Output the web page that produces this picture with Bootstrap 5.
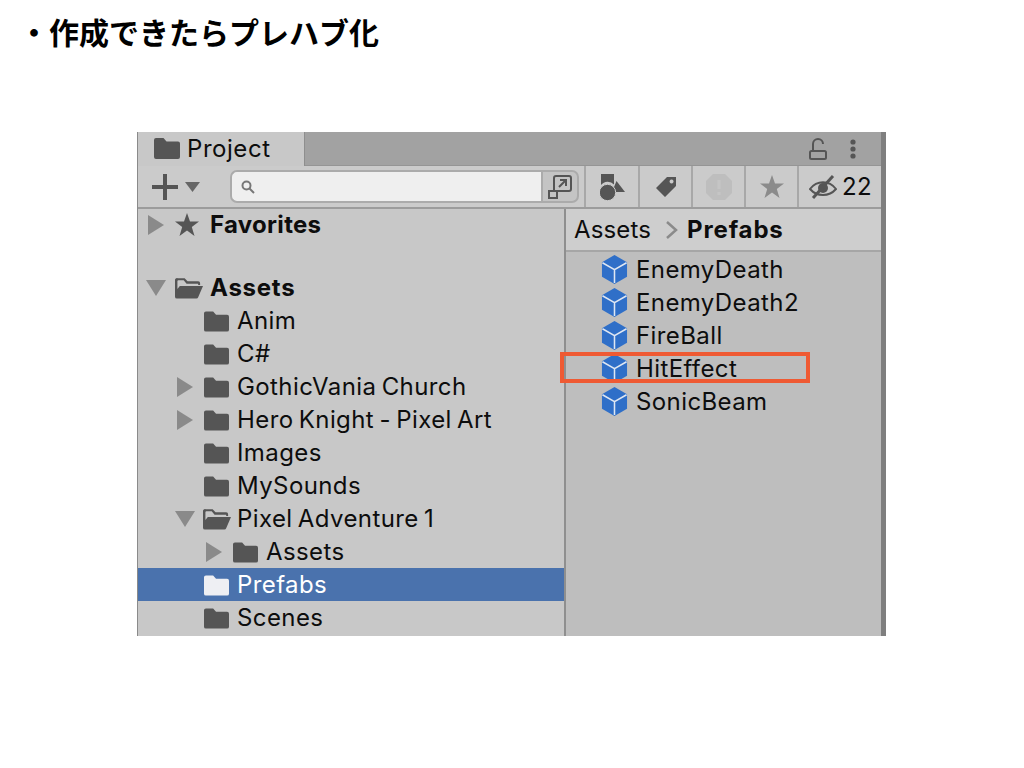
<!DOCTYPE html>
<html lang="ja">
<head>
  <meta charset="UTF-8" />
  <title>Prefab</title>
  <link href="https://cdn.jsdelivr.net/npm/bootstrap@5.3.0/dist/css/bootstrap.min.css" rel="stylesheet" />
  <style>
    html, body { background: #fff; }
    body { width: 1024px; height: 768px; overflow: hidden; font-family: Inter, "Liberation Sans", sans-serif; }
    .slide-title { font: 700 30px/44px "Noto Sans CJK JP", sans-serif; color: #000; padding: 9px 0 0 19px; margin: 0; height: 132px; }
    .project-win { width: 749px; height: 504px; margin-left: 137px; background: #c8c8c8; color: #0d0d0d; font-size: 24px; letter-spacing: .4px; word-spacing: -1.8px; line-height: 33px; overflow: hidden; border-left: 1px solid #8a8a8a; border-right: 5px solid #7f7f7f; }
    .tab-bar { height: 34px; background: #a2a2a2; }
    .tab-active { width: 167px; height: 34px; background: #c8c8c8; padding: 0 0 2px 16px; gap: 7px; border-right: 1px solid #8e8e8e; letter-spacing: .55px; }
    .tab-bar-tools { gap: 23px; padding-right: 25px; border-bottom: 1px solid #959595; height: 34px; }
    .tool-row { height: 43px; background: #cbcbcb; border-bottom: 2px solid #9c9c9c; }
    .plus-btn { width: 92px; padding-left: 14px; gap: 7px; }
    .search-box { width: 311px; height: 33px; background: #efefef; border: 2px solid #ababab; border-right: 0; border-radius: 7px 0 0 7px; padding-left: 9px; }
    .maximize-btn { width: 38px; height: 33px; border: 2px solid #ababab; border-radius: 0 7px 7px 0; background: #c4c4c4; }
    .tool-btn { height: 41px; border-left: 2px solid #a8a8a8; width: 53px; }
    .tool-first { width: 54px; }
    .tool-eye { width: 84px; padding-left: 10px; gap: 5px; }
    .panes { height: 427px; }
    .tree-pane { width: 428px; border-right: 2px solid #8f8f8f; }
    .tree-row { height: 33px; white-space: nowrap; }
    .tree-row.picked { background: #4a72ad; color: #fff; }
    .tree-row.head { font-weight: 700; letter-spacing: .75px; }
    .tree-row.row-fav { letter-spacing: .3px; }
    .row-short { height: 31px; }
    .row-fav { padding-left: 10px; }
    .row-root { padding-left: 8px; }
    .row-plain { padding-left: 66px; }
    .row-child { padding-left: 39px; }
    .row-open { padding-left: 37px; }
    .row-deep { padding-left: 68px; }
    .arrow-r { width: 16px; height: 20px; fill: #8a8a8a; margin-right: 11px; flex: none; }
    .arrow-d { width: 20px; height: 16px; fill: #8a8a8a; margin-right: 8px; flex: none; }
    .row-fav .arrow-r { margin-right: 10px; }
    .row-root .arrow-d { margin-right: 9px; }
    .icon-star { width: 26px; height: 24px; fill: #555; margin-right: 10px; }
    .icon-open { width: 28px; height: 22px; fill: #555; margin-right: 6px; flex: none; }
    .row-root .icon-open { margin-right: 7px; }
    .icon-folder { width: 25px; height: 22px; fill: #555; margin-right: 8px; flex: none; }
    .picked .icon-folder { fill: #eeeff3; }
    .files-pane { flex: 1; background: #bebebe; }
    .crumb-bar { height: 43px; background: #cecece; border-bottom: 2px solid #a6a6a6; padding-left: 8px; letter-spacing: .15px; }
    .crumb-bar svg { margin: 0 9px 0 14px; }
    .crumb-bar .fw-bold { letter-spacing: .85px; }
    .file-list { position: relative; padding-top: 1px; }
    .file-row { height: 33px; padding-left: 35px; gap: 8px; }
    .red-frame { position: absolute; left: -6px; top: 100px; width: 250px; height: 31px; border: 4px solid #ef5a33; }
  </style>
</head>
<body>
<svg width="0" height="0" class="position-absolute">
  <symbol id="ic-folder" viewBox="0 0 26 22"><path d="M2 1h7.500l3 3.500H24a2 2 0 0 1 2 2V20a2 2 0 0 1-2 2H2a2 2 0 0 1-2-2V3a2 2 0 0 1 2-2z"/></symbol>
  <symbol id="ic-open" viewBox="0 0 29 22"><path d="M3 1h7l3 3h11a2 2 0 0 1 2 2v2H24V6.500H12L9 3H3.500a1 1 0 0 0-1 1v8L5 9h24l-5 11.500a2 2 0 0 1-2 1.500H2a2 2 0 0 1-2-2V3a2 2 0 0 1 3-2z"/></symbol>
  <symbol id="ic-right" viewBox="0 0 16 20"><path d="M0 0l16 10L0 20z"/></symbol>
  <symbol id="ic-down" viewBox="0 0 20 16"><path d="M0 0h20L10 16z"/></symbol>
  <symbol id="ic-star" viewBox="0 0 24 24"><path d="M12 0l3 8.500h9l-7.200 5.400 2.700 9L12 17.500 4.500 23l2.700-9.100L0 8.500h9z"/></symbol>
  <symbol id="ic-cube" viewBox="0 0 28 30">
    <path fill="#2f6fc8" d="M14 0l13 7.500v15L14 30 1 22.500v-15z"/>
    <path fill="none" stroke="#dfe7f2" stroke-width="1.600" d="M1.500 8L14 15.200 26.500 8M14 15.200V29"/>
  </symbol>
</svg>

<h1 class="slide-title">・作成できたらプレハブ化</h1>

<div class="project-win">
  <div class="tab-bar d-flex justify-content-between">
    <div class="tab-active d-flex align-items-center">
      <svg width="26" height="22" fill="#555"><use href="#ic-folder"/></svg>
      <span>Project</span>
    </div>
    <div class="tab-bar-tools d-flex align-items-center flex-grow-1 justify-content-end">
      <svg width="18" height="22" fill="none" stroke="#555" stroke-width="2"><path d="M4 12V6a5 5 0 0 1 10 0"/><rect x="1" y="13" width="16" height="8" rx="1.500"/></svg>
      <svg width="6" height="22" fill="#555"><circle cx="3" cy="4" r="2.600"/><circle cx="3" cy="11" r="2.600"/><circle cx="3" cy="18" r="2.600"/></svg>
    </div>
  </div>

  <div class="tool-row d-flex align-items-center">
    <div class="plus-btn d-flex align-items-center">
      <svg width="26" height="26" fill="#555"><path d="M11 0h4v11h11v4H15v11h-4V15H0v-4h11z"/></svg>
      <svg width="15" height="10" fill="#666"><path d="M0 0h15L7.500 10z"/></svg>
    </div>
    <div class="search-box d-flex align-items-center">
      <svg width="14" height="14" fill="none" stroke="#777" stroke-width="2"><circle cx="5.500" cy="5.500" r="4"/><path d="M8.500 8.500L13 13"/></svg>
    </div>
    <div class="maximize-btn d-flex align-items-center justify-content-center">
      <svg width="26" height="26" fill="none" stroke="#555" stroke-width="2"><path d="M7 16V4a2 2 0 0 1 2-2h13a2 2 0 0 1 2 2v11a2 2 0 0 1-2 2H11"/><rect x="2" y="17" width="8" height="7"/><path d="M12 13l7-7M13 6h6v6"/></svg>
    </div>
    <div class="ms-auto d-flex">
      <div class="tool-btn tool-first d-flex align-items-center justify-content-center">
        <svg width="25" height="28" fill="#555"><path d="M16.500 8L25 19H12z"/><circle cx="7.500" cy="19.500" r="8.200" stroke="#cbcbcb" stroke-width="1"/><path d="M1 1h13v10.500A8.500 8.500 0 0 0 1 12z"/></svg>
      </div>
      <div class="tool-btn d-flex align-items-center justify-content-center">
        <svg width="22" height="22" fill="#555"><path fill-rule="evenodd" d="M12 1h9v9L10 21 1 12zM16.500 3.500a2 2 0 1 0 .1 0z"/></svg>
      </div>
      <div class="tool-btn d-flex align-items-center justify-content-center">
        <svg width="26" height="26" fill="#bebebe"><path d="M7 0h12l7 7v12l-7 7H7l-7-7V7z"/><rect x="11.500" y="6" width="3" height="9" fill="#c5c5c5"/><rect x="11.500" y="18" width="3" height="3" fill="#c5c5c5"/></svg>
      </div>
      <div class="tool-btn d-flex align-items-center justify-content-center">
        <svg width="24" height="24" fill="#8b8b8b"><use href="#ic-star"/></svg>
      </div>
      <div class="tool-btn tool-eye d-flex align-items-center">
        <svg width="28" height="24" fill="none" stroke="#555" stroke-width="2"><path d="M1 14c7-9 19-9 26 0-7 8-19 8-26 0z"/><circle cx="14" cy="13" r="5" fill="#555" stroke="none"/><path d="M24 1L4 23" stroke-width="3"/></svg>
        <span>22</span>
      </div>
    </div>
  </div>

  <div class="panes d-flex">
    <div class="tree-pane">
      <div class="tree-row row-short row-fav head d-flex align-items-center"><svg class="arrow-r"><use href="#ic-right"/></svg><svg class="icon-star"><use href="#ic-star"/></svg>Favorites</div>
      <div class="tree-row row-short"></div>
      <div class="tree-row row-root head d-flex align-items-center"><svg class="arrow-d"><use href="#ic-down"/></svg><svg class="icon-open"><use href="#ic-open"/></svg>Assets</div>
      <div class="tree-row row-plain d-flex align-items-center"><svg class="icon-folder"><use href="#ic-folder"/></svg>Anim</div>
      <div class="tree-row row-plain d-flex align-items-center"><svg class="icon-folder"><use href="#ic-folder"/></svg>C#</div>
      <div class="tree-row row-child d-flex align-items-center"><svg class="arrow-r"><use href="#ic-right"/></svg><svg class="icon-folder"><use href="#ic-folder"/></svg>GothicVania Church</div>
      <div class="tree-row row-child d-flex align-items-center"><svg class="arrow-r"><use href="#ic-right"/></svg><svg class="icon-folder"><use href="#ic-folder"/></svg>Hero Knight - Pixel Art</div>
      <div class="tree-row row-plain d-flex align-items-center"><svg class="icon-folder"><use href="#ic-folder"/></svg>Images</div>
      <div class="tree-row row-plain d-flex align-items-center"><svg class="icon-folder"><use href="#ic-folder"/></svg>MySounds</div>
      <div class="tree-row row-open d-flex align-items-center"><svg class="arrow-d"><use href="#ic-down"/></svg><svg class="icon-open"><use href="#ic-open"/></svg>Pixel Adventure 1</div>
      <div class="tree-row row-deep d-flex align-items-center"><svg class="arrow-r"><use href="#ic-right"/></svg><svg class="icon-folder"><use href="#ic-folder"/></svg>Assets</div>
      <div class="tree-row picked row-plain d-flex align-items-center"><svg class="icon-folder"><use href="#ic-folder"/></svg>Prefabs</div>
      <div class="tree-row row-plain d-flex align-items-center"><svg class="icon-folder"><use href="#ic-folder"/></svg>Scenes</div>
    </div>

    <div class="files-pane">
      <div class="crumb-bar d-flex align-items-center">
        <span>Assets</span>
        <svg width="13" height="18" fill="none" stroke="#8a8a8a" stroke-width="2.500"><path d="M2 1l9 8-9 8"/></svg>
        <span class="fw-bold">Prefabs</span>
      </div>
      <div class="file-list">
        <div class="file-row d-flex align-items-center"><svg width="27" height="29"><use href="#ic-cube"/></svg>EnemyDeath</div>
        <div class="file-row d-flex align-items-center"><svg width="27" height="29"><use href="#ic-cube"/></svg>EnemyDeath2</div>
        <div class="file-row d-flex align-items-center"><svg width="27" height="29"><use href="#ic-cube"/></svg>FireBall</div>
        <div class="file-row d-flex align-items-center"><svg width="27" height="29"><use href="#ic-cube"/></svg>HitEffect</div>
        <div class="file-row d-flex align-items-center"><svg width="27" height="29"><use href="#ic-cube"/></svg>SonicBeam</div>
        <div class="red-frame"></div>
      </div>
    </div>
  </div>
</div>

<script src="https://cdn.jsdelivr.net/npm/bootstrap@5.3.0/dist/js/bootstrap.bundle.min.js"></script>
</body>
</html>
